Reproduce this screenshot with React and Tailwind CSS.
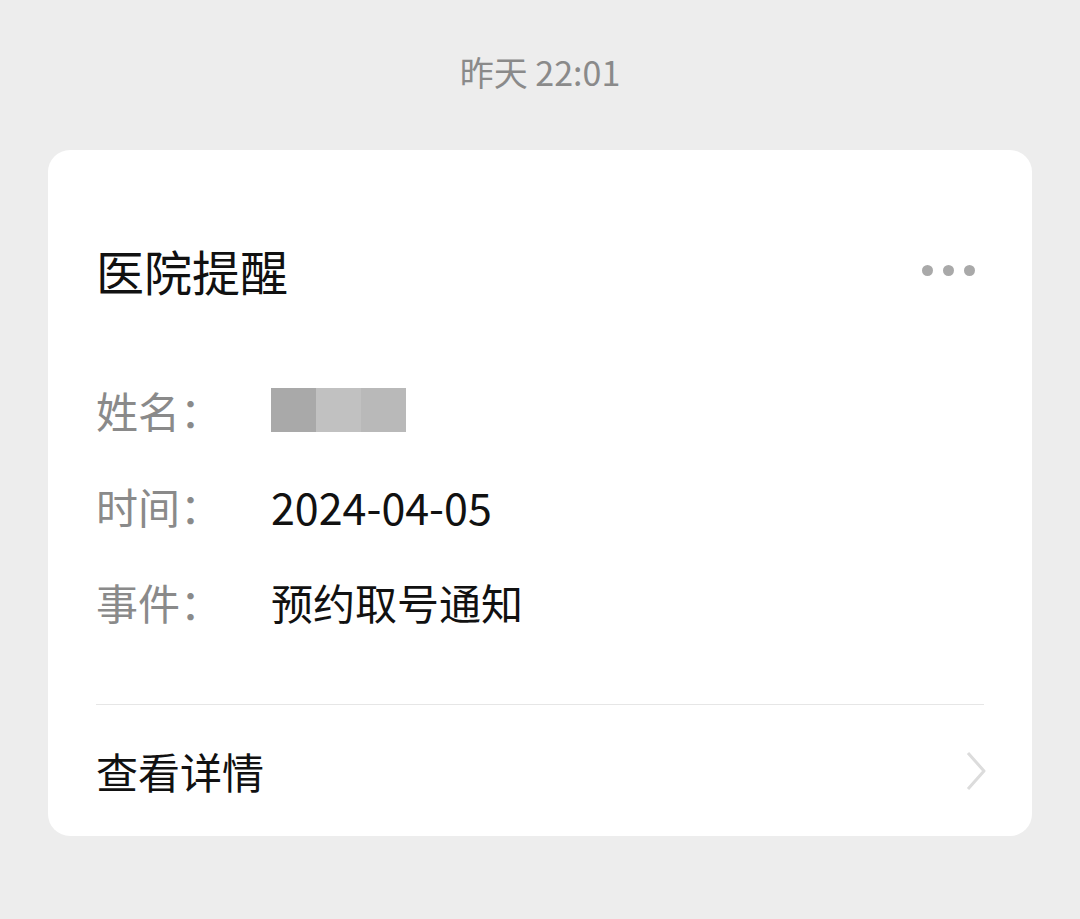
export default function App() {
  const rows = [
    { label: "姓名：", value: null },
    { label: "时间：", value: "2024-04-05" },
    { label: "事件：", value: "预约取号通知" },
  ];

  return (
    <div
      className="min-h-[919px] w-[1080px] bg-[#ededed] px-12"
      style={{ fontFamily: '"Noto Sans CJK SC", "Noto Sans", sans-serif' }}
    >
      {/* timestamp */}
      <div className="flex h-[150px] items-start justify-center pt-[48px]">
        <span className="text-[34px] leading-[48px] text-[#8a8a8a]">昨天 22:01</span>
      </div>

      {/* card */}
      <div className="rounded-[22px] bg-white px-12 pt-[92px]">
        <div className="flex h-[56px] items-center justify-between">
          <h2 className="text-[48px] font-normal leading-[56px] text-[#111]">医院提醒</h2>
          <div className="mr-[9px] flex items-center gap-[10px]">
            <span className="h-[11px] w-[11px] rounded-full bg-[#a9a9a9]"></span>
            <span className="h-[11px] w-[11px] rounded-full bg-[#a9a9a9]"></span>
            <span className="h-[11px] w-[11px] rounded-full bg-[#a9a9a9]"></span>
          </div>
        </div>

        <div className="mt-[64px]">
          {rows.map((row, i) => (
            <div key={i} className="flex h-[96px] items-center">
              <span className="w-[175px] text-[42px] leading-none text-[#8a8a8a]">{row.label}</span>
              {row.value ? (
                <span className={`${i === 1 ? "text-[43px]" : "text-[42px]"} leading-none text-[#111]`}>{row.value}</span>
              ) : (
                <div className="flex h-[44px]">
                  <span className="w-[45px] bg-[#a9a9a9]"></span>
                  <span className="w-[45px] bg-[#c1c1c1]"></span>
                  <span className="w-[45px] bg-[#b9b9b9]"></span>
                </div>
              )}
            </div>
          ))}
        </div>

        <div className="mt-[54px] h-px bg-[#e6e6e6]"></div>

        <div className="flex h-[131px] items-center justify-between">
          <span className="text-[42px] leading-none text-[#111]">查看详情</span>
          <svg width="24" height="40" viewBox="0 0 24 40" className="mr-[-4px]">
            <path d="M4 2 L20 20 L4 38" fill="none" stroke="#dcdcdc" strokeWidth="3" strokeLinejoin="round" />
          </svg>
        </div>
      </div>
    </div>
  );
}
